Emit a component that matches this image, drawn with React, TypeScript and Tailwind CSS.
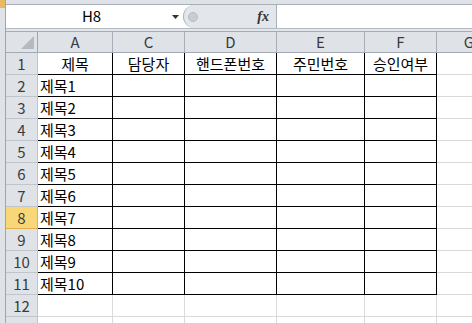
const colW = ["w-[75px]", "w-[72px]", "w-[92px]", "w-[88px]", "w-[72px]"]
const colNames = ["A", "C", "D", "E", "F"]
const headers = ["제목", "담당자", "핸드폰번호", "주민번호", "승인여부"]

const font = "font-['Noto_Sans_CJK_KR','Noto_Sans',sans-serif]"

const Corner = () => (
    <div className="w-[32px] shrink-0 h-full border-r border-[#9ea6b0] bg-[#dfe3e8] flex items-end justify-end p-[3px]">
        <svg width="13" height="13" viewBox="0 0 13 13">
            <polygon points="13,0 13,13 0,13" fill="#b4bac2" />
        </svg>
    </div>
)

const App = () => {
    const rows = Array.from({ length: 13 }, (_, i) => i + 1)
    return (
        <div className={`w-[472px] h-[323px] overflow-hidden flex bg-white ${font}`}>
            <div className="w-[6px] shrink-0 h-full bg-[#dfe2e7] border-r border-[#a0a6ae] flex flex-col">
                <div className="h-[8px] bg-[#e9b863]" />
            </div>
            <div className="flex-1 min-w-0 overflow-hidden flex flex-col">
                <div className="h-[5px] shrink-0 bg-[#dfe3e8] border-b border-[#a8afb8]" />
                <div className="h-[24px] shrink-0 flex border-b border-[#b4bac2] bg-white">
                    <div className="w-[165px] shrink-0 flex items-center justify-center text-[15px] text-black pl-[6px]">H8</div>
                    <div className="w-[9px] shrink-0 flex items-center justify-center">
                        <svg width="7" height="4" viewBox="0 0 7 4">
                            <polygon points="0,0 7,0 3.5,4" fill="#333" />
                        </svg>
                    </div>
                    <div className="w-[3px] shrink-0" />
                    <div className="w-[94px] shrink-0 h-full bg-[#e3e6ea] border-l border-r border-[#a9b0b9] rounded-l-full flex items-center justify-between pl-[4px] pr-[7px]">
                        <div className="w-[10px] h-[10px] rounded-full bg-[#c9cdd3] border border-[#b5bbc3]" />
                        <span className="font-['Liberation_Serif',serif] italic text-[14px] text-[#333] font-bold">fx</span>
                    </div>
                    <div className="flex-1 bg-white" />
                </div>
                <div className="h-[2px] shrink-0 bg-[#e3e6ea]" />
                <div className="h-[22px] shrink-0 flex border-t border-b border-[#a3aab3] bg-[#dfe3e8] text-[15px] text-[#3b3b3b]">
                    <Corner />
                    {colNames.map((c, i) => (
                        <div key={c} className={`${colW[i]} shrink-0 border-r border-[#a8afb8] flex items-center justify-center`}>{c}</div>
                    ))}
                    <div className="w-[64px] shrink-0 flex items-center justify-center">G</div>
                </div>
                {rows.map(r => {
                    const inTable = r <= 11
                    return (
                        <div key={r} className="h-[22px] shrink-0 flex text-[15px]">
                            <div className={`w-[32px] shrink-0 border-r border-b flex items-center justify-center pt-[1px] ${r === 8 ? "bg-[#f8d778] border-[#e4ad4c] text-[#3b3b3b]" : "bg-[#dfe3e8] border-[#c0c5cc] text-[#3b3b3b]"}`}>{r <= 12 ? r : ""}</div>
                            {colNames.map((c, i) => (
                                <div
                                    key={c}
                                    className={`${colW[i]} shrink-0 border-r border-b flex items-center pt-[2px] text-black ${inTable ? "border-black" : "border-[#dadada]"} ${r === 1 ? "justify-center" : "justify-start pl-[2px]"}`}
                                >
                                    {r === 1 ? headers[i] : i === 0 && inTable ? `제목${r - 1}` : ""}
                                </div>
                            ))}
                            <div className="w-[64px] shrink-0 border-b border-[#dadada]" />
                        </div>
                    )
                })}
            </div>
        </div>
    )
}

export default App
